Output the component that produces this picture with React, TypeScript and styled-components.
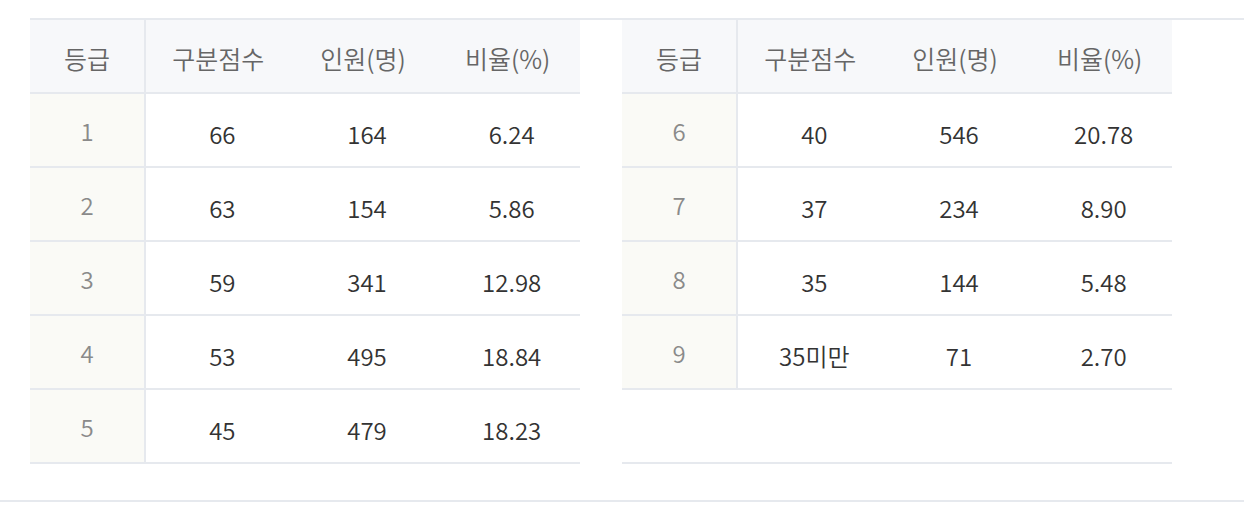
import React from 'react';
import styled, { createGlobalStyle } from 'styled-components';

const GlobalStyle = createGlobalStyle`
  body {
    margin: 0;
    background: #ffffff;
    font-family: 'Noto Sans CJK KR', 'Noto Sans', sans-serif;
  }
`;

const LINE = '#e6e9ee';

const Section = styled.div`
  padding: 18px 0 36px;
  border-bottom: 2px solid ${LINE};
`;

const TableRow = styled.div`
  margin-left: 30px;
  border-top: 2px solid ${LINE};
  display: flex;
  gap: 42px;
  align-items: flex-start;
`;

const Table = styled.div`
  width: 550px;
  display: grid;
  grid-template-columns: 116px repeat(3, 1fr);
`;

const BaseCell = styled.div`
  box-sizing: border-box;
  height: 74px;
  border-bottom: 2px solid ${LINE};
  display: flex;
  align-items: center;
  justify-content: center;
  font-size: 24px;
  font-weight: 350;
`;

const HeadCell = styled(BaseCell)<{ $first?: boolean }>`
  background: #f7f8fa;
  color: #666666;
  font-size: 25px;
  padding-top: 4px;
  border-right: ${p => (p.$first ? `2px solid ${LINE}` : 'none')};
`;

const GradeCell = styled(BaseCell)`
  background: #fafaf6;
  color: #8a8a8a;
  border-right: 2px solid ${LINE};
`;

const Cell = styled(BaseCell)`
  color: #333333;
  padding: 6px 0 0 8px;
`;

const EmptyRow = styled.div`
  grid-column: 1 / -1;
  height: 74px;
  box-sizing: border-box;
  border-bottom: 2px solid ${LINE};
`;

type Row = { grade: string; score: string; count: string; ratio: string };

const left: Row[] = [
  { grade: '1', score: '66', count: '164', ratio: '6.24' },
  { grade: '2', score: '63', count: '154', ratio: '5.86' },
  { grade: '3', score: '59', count: '341', ratio: '12.98' },
  { grade: '4', score: '53', count: '495', ratio: '18.84' },
  { grade: '5', score: '45', count: '479', ratio: '18.23' },
];

const right: Row[] = [
  { grade: '6', score: '40', count: '546', ratio: '20.78' },
  { grade: '7', score: '37', count: '234', ratio: '8.90' },
  { grade: '8', score: '35', count: '144', ratio: '5.48' },
  { grade: '9', score: '35미만', count: '71', ratio: '2.70' },
];

const GradeTable = ({ rows, pad }: { rows: Row[]; pad?: number }) => (
  <Table>
    <HeadCell $first>등급</HeadCell>
    <HeadCell>구분점수</HeadCell>
    <HeadCell>인원(명)</HeadCell>
    <HeadCell>비율(%)</HeadCell>
    {rows.map(r => (
      <React.Fragment key={r.grade}>
        <GradeCell>{r.grade}</GradeCell>
        <Cell>{r.score}</Cell>
        <Cell>{r.count}</Cell>
        <Cell>{r.ratio}</Cell>
      </React.Fragment>
    ))}
    {Array.from({ length: pad || 0 }).map((_, i) => (
      <EmptyRow key={i} />
    ))}
  </Table>
);

export default function App() {
  return (
    <>
      <GlobalStyle />
      <Section>
        <TableRow>
          <GradeTable rows={left} />
          <GradeTable rows={right} pad={1} />
        </TableRow>
      </Section>
    </>
  );
}
